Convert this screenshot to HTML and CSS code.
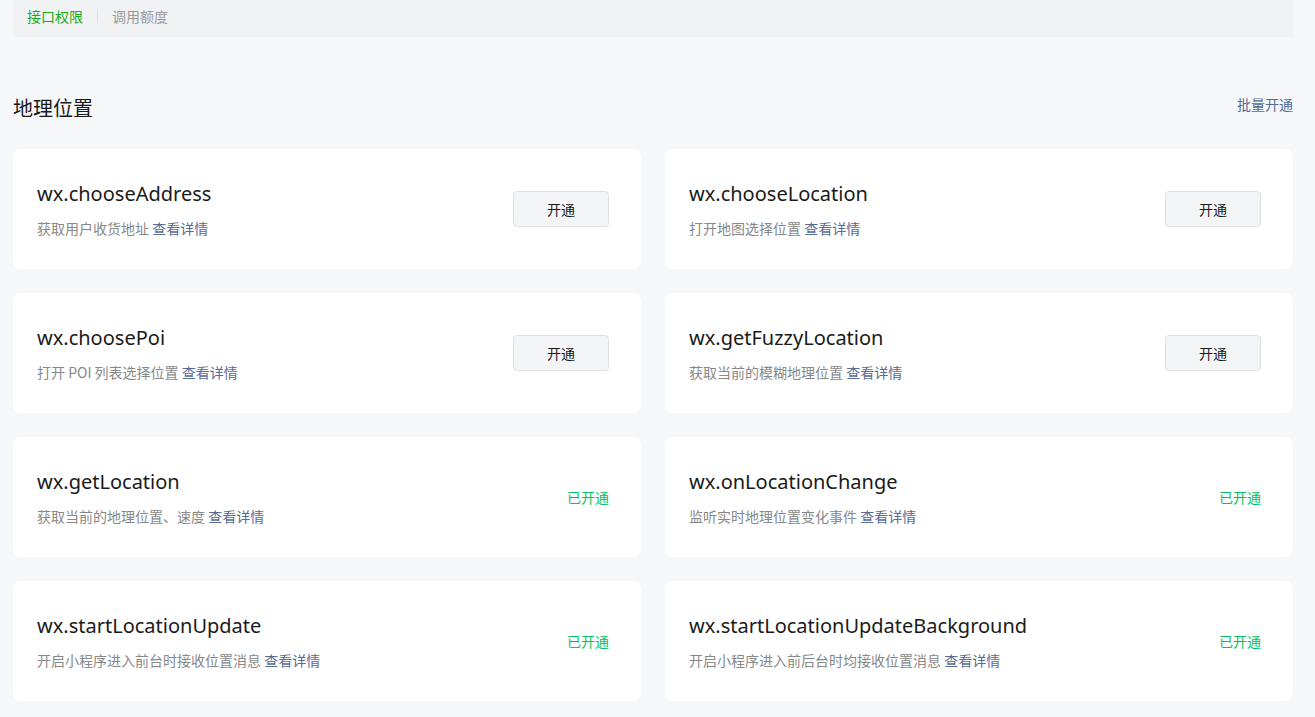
FILE: index.html
```html
<!DOCTYPE html>
<html lang="zh-CN">
<head>
<meta charset="utf-8">
<title>接口权限</title>
<link rel="stylesheet" href="styles.css">
</head>
<body>
<div class="page">
  <div class="tabs">
    <a class="tab tab-active">接口权限</a>
    <span class="tab-sep"></span>
    <a class="tab">调用额度</a>
  </div>

  <div class="section-head">
    <h2 class="section-title">地理位置</h2>
    <a class="batch-link">批量开通</a>
  </div>

  <div class="grid">
    <div class="card">
      <div class="card-info">
        <div class="api-name">wx.chooseAddress</div>
        <div class="api-desc">获取用户收货地址 <a class="detail">查看详情</a></div>
      </div>
      <button class="btn-open">开通</button>
    </div>
    <div class="card">
      <div class="card-info">
        <div class="api-name">wx.chooseLocation</div>
        <div class="api-desc">打开地图选择位置 <a class="detail">查看详情</a></div>
      </div>
      <button class="btn-open">开通</button>
    </div>
    <div class="card">
      <div class="card-info">
        <div class="api-name">wx.choosePoi</div>
        <div class="api-desc">打开 POI 列表选择位置 <a class="detail">查看详情</a></div>
      </div>
      <button class="btn-open">开通</button>
    </div>
    <div class="card">
      <div class="card-info">
        <div class="api-name">wx.getFuzzyLocation</div>
        <div class="api-desc">获取当前的模糊地理位置 <a class="detail">查看详情</a></div>
      </div>
      <button class="btn-open">开通</button>
    </div>
    <div class="card">
      <div class="card-info">
        <div class="api-name">wx.getLocation</div>
        <div class="api-desc">获取当前的地理位置、速度 <a class="detail">查看详情</a></div>
      </div>
      <span class="status-on">已开通</span>
    </div>
    <div class="card">
      <div class="card-info">
        <div class="api-name">wx.onLocationChange</div>
        <div class="api-desc">监听实时地理位置变化事件 <a class="detail">查看详情</a></div>
      </div>
      <span class="status-on">已开通</span>
    </div>
    <div class="card">
      <div class="card-info">
        <div class="api-name">wx.startLocationUpdate</div>
        <div class="api-desc">开启小程序进入前台时接收位置消息 <a class="detail">查看详情</a></div>
      </div>
      <span class="status-on">已开通</span>
    </div>
    <div class="card">
      <div class="card-info">
        <div class="api-name">wx.startLocationUpdateBackground</div>
        <div class="api-desc">开启小程序进入前后台时均接收位置消息 <a class="detail">查看详情</a></div>
      </div>
      <span class="status-on">已开通</span>
    </div>
  </div>
</div>
</body>
</html>
```

FILE: styles.css
```css
html, body {
  margin: 0;
  padding: 0;
  background: #f6f7f9;
}
body {
  font-family: "Noto Sans", "Noto Sans CJK SC", sans-serif;
  color: #1a1a1a;
}
.page {
  width: 1280px;
  margin-left: 13px;
}
.tabs {
  height: 37px;
  background: #f1f2f4;
  display: flex;
  align-items: center;
  padding-left: 14px;
  padding-bottom: 6px;
  box-sizing: border-box;
}
.tab {
  font-size: 14px;
  line-height: 20px;
  color: #9a9a9a;
  font-family: "Noto Sans CJK SC", sans-serif;
  cursor: pointer;
}
.tab-active {
  color: #1aad19;
}
.tab-sep {
  width: 1px;
  height: 14px;
  background: #e2e3e5;
  margin: 0 14px;
}
.section-head {
  display: flex;
  justify-content: space-between;
  align-items: flex-start;
  margin-top: 57px;
  margin-bottom: 27px;
}
.section-title {
  margin: 0;
  font-size: 20px;
  line-height: 28px;
  font-weight: normal;
  color: #1a1a1a;
  font-family: "Noto Sans CJK SC", sans-serif;
}
.batch-link {
  font-size: 14px;
  line-height: 20px;
  color: #576b95;
  font-family: "Noto Sans CJK SC", sans-serif;
  cursor: pointer;
}
.grid {
  display: grid;
  grid-template-columns: 1fr 1fr;
  gap: 24px;
}
.card {
  background: #fff;
  border-radius: 8px;
  height: 120px;
  box-sizing: border-box;
  padding: 0 32px 0 24px;
  display: flex;
  align-items: center;
  justify-content: space-between;
}
.api-name {
  font-size: 20px;
  line-height: 28px;
  color: #1a1a1a;
}
.api-desc {
  margin-top: 10px;
  font-size: 14px;
  line-height: 20px;
  color: #888;
  font-family: "Noto Sans CJK SC", sans-serif;
}
.detail {
  color: #576b95;
  cursor: pointer;
}
.btn-open {
  width: 96px;
  height: 36px;
  background: #f4f5f7;
  border: 1px solid #e0e1e3;
  border-radius: 4px;
  font-family: "Noto Sans CJK SC", sans-serif;
  font-size: 14px;
  color: #1a1a1a;
  padding: 0;
  cursor: pointer;
}
.status-on {
  font-size: 14px;
  line-height: 20px;
  color: #07c160;
  font-family: "Noto Sans CJK SC", sans-serif;
}
```
